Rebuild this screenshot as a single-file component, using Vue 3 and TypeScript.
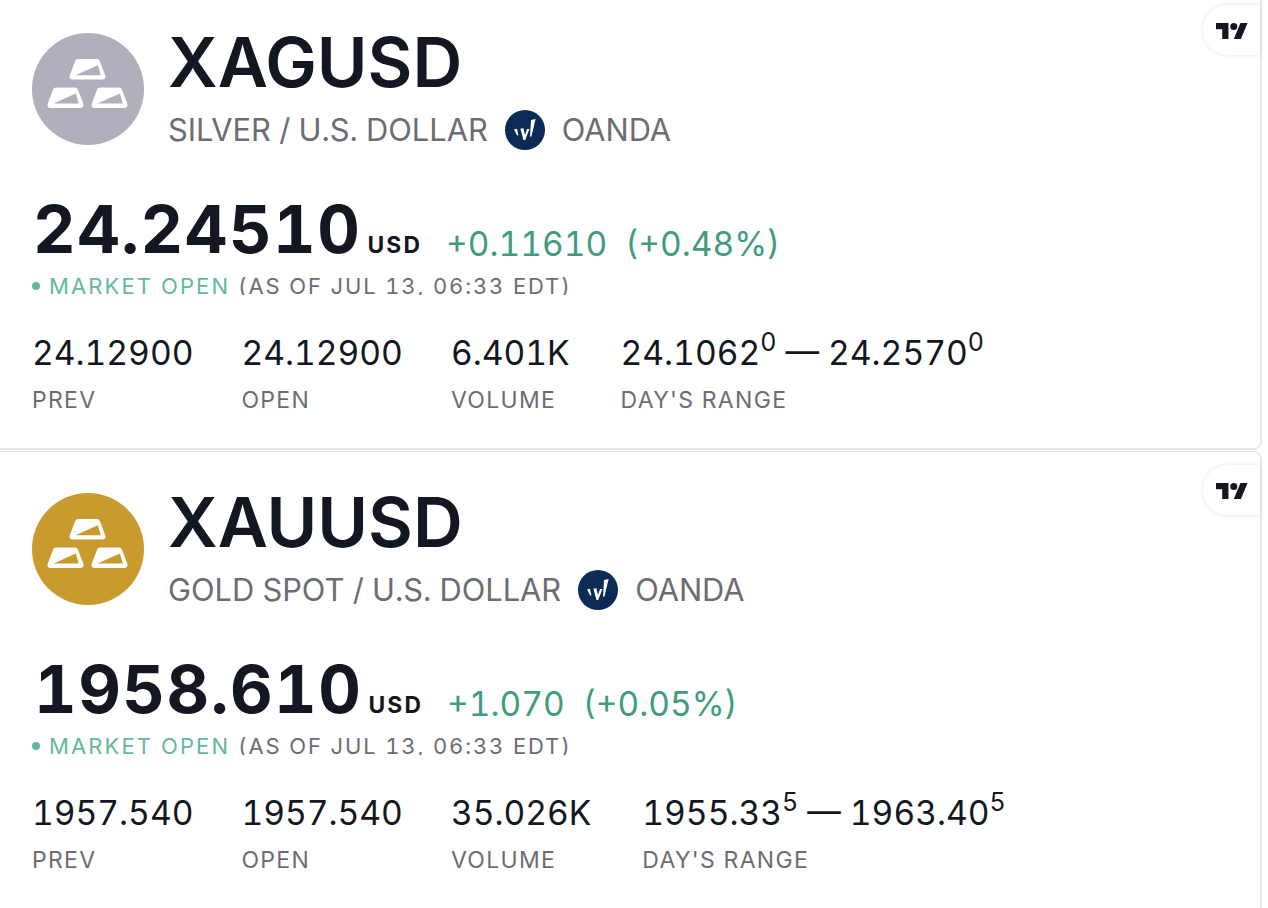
<script setup lang="ts">
interface Stat {
  label: string
  value: string
}

interface Quote {
  symbol: string
  name: string
  tone: string
  price: string
  change: string
  percent: string
  stats: Stat[]
  low: string
  lowSup: string
  high: string
  highSup: string
}

const quotes: Quote[] = [
  {
    symbol: "XAGUSD",
    name: "SILVER / U.S. DOLLAR",
    tone: "#b0afbb",
    price: "24.24510",
    change: "+0.11610",
    percent: "(+0.48%)",
    stats: [
      { label: "PREV", value: "24.12900" },
      { label: "OPEN", value: "24.12900" },
      { label: "VOLUME", value: "6.401K" },
    ],
    low: "24.1062",
    lowSup: "0",
    high: "24.2570",
    highSup: "0",
  },
  {
    symbol: "XAUUSD",
    name: "GOLD SPOT / U.S. DOLLAR",
    tone: "#c99a2e",
    price: "1958.610",
    change: "+1.070",
    percent: "(+0.05%)",
    stats: [
      { label: "PREV", value: "1957.540" },
      { label: "OPEN", value: "1957.540" },
      { label: "VOLUME", value: "35.026K" },
    ],
    low: "1955.33",
    lowSup: "5",
    high: "1963.40",
    highSup: "5",
  },
]

// top, left and right ingot of the stack
const bars = [
  { x: 0, y: 0 },
  { x: -22, y: 28.4 },
  { x: 22, y: 28.4 },
]
</script>

<template>
  <div class="page">
    <section v-for="q in quotes" :key="q.symbol" class="card">
      <div class="tv-badge">
        <svg class="tv-mark" width="32" height="16" viewBox="0 4 36 18">
          <path d="M14 22H7V11H0V4h14v18zM28 22h-8l7.5-18h8L28 22z" fill="#131722" />
          <circle cx="20" cy="8" r="4" fill="#131722" />
        </svg>
      </div>

      <header class="head">
        <svg class="logo" width="112" height="112" viewBox="0 0 112 112">
          <circle cx="56" cy="56" r="56" :fill="q.tone" />
          <g v-for="(b, i) in bars" :key="i" :transform="`translate(${b.x} ${b.y})`">
            <path d="M46 29H65L70.5 43.5H40.5Z" fill="#fff" stroke="#fff" stroke-width="6" stroke-linejoin="round" />
            <path d="M43.6 42.2L65.8 32.2L68.8 42.2Z" :fill="q.tone" />
          </g>
        </svg>
        <div class="head-text">
          <h1 class="symbol">{{ q.symbol }}</h1>
          <div class="desc">
            <span>{{ q.name }}</span>
            <svg class="broker" width="40" height="40" viewBox="0 0 40 40">
              <circle cx="20" cy="20" r="20" fill="#0b2a55" />
              <path d="M9 19.5L12 18.8L13.4 25.4L12.2 25.6Z" fill="#fff" />
              <path d="M15.4 18.8L18.4 18.2L20 25L22 19L24.4 19L20.2 30L18.4 30Z" fill="#fff" />
              <path d="M26 10L30.6 9L26.4 26.6L25 26.8Z" fill="#fff" />
            </svg>
            <span>OANDA</span>
          </div>
        </div>
      </header>

      <div class="price-row">
        <span class="price">{{ q.price }}</span>
        <span class="currency">USD</span>
        <span class="change">{{ q.change }}</span>
        <span class="change">{{ q.percent }}</span>
      </div>

      <div class="status">
        <i class="dot"></i>
        <span class="open">MARKET OPEN</span>
        <span class="asof">(AS OF JUL 13, 06:33 EDT)</span>
      </div>

      <div class="stats">
        <div v-for="s in q.stats" :key="s.label" class="stat">
          <div class="value">{{ s.value }}</div>
          <div class="label">{{ s.label }}</div>
        </div>
        <div class="stat range">
          <div class="value">
            {{ q.low }}<sup>{{ q.lowSup }}</sup> — {{ q.high }}<sup>{{ q.highSup }}</sup>
          </div>
          <div class="label">DAY'S RANGE</div>
        </div>
      </div>
    </section>
  </div>
</template>

<style scoped>
.page {
  width: 1262px;
  height: 908px;
  overflow: hidden;
  font-family: Inter, "Liberation Sans", sans-serif;
  font-variant-numeric: tabular-nums;
  color: #131722;
  background: #fff;
}

.card {
  position: relative;
  box-sizing: border-box;
  height: 450px;
  padding: 33px 0 0 32px;
  background: #fff;
  border-right: 2px solid #e8e8ea;
  border-bottom: 2px solid #e6e6e8;
  border-bottom-right-radius: 8px;
}

.card + .card {
  height: 458px;
  margin-top: 1px;
  padding-top: 41px;
  border-top: 1px solid #e6e6e8;
  border-bottom: none;
  border-top-right-radius: 8px;
  border-bottom-right-radius: 0;
}

.tv-badge {
  position: absolute;
  top: 5px;
  right: 0;
  width: 57px;
  height: 50px;
  display: flex;
  align-items: center;
  padding-left: 13px;
  box-sizing: border-box;
  background: #fff;
  border-radius: 25px 0 0 25px;
  box-shadow: 0 0 5px rgba(19, 23, 34, 0.1);
}

.card + .card .tv-badge {
  top: 13px;
}

.tv-mark {
  margin-top: 2px;
}

.head {
  display: flex;
  gap: 24px;
}

.logo {
  flex: none;
}

.head-text {
  margin-top: -8px;
}

.symbol {
  margin: 0;
  font-size: 69px;
  line-height: 74px;
  font-weight: 600;
  letter-spacing: 0;
}

.desc {
  display: flex;
  align-items: center;
  gap: 17px;
  margin-top: 11px;
  font-size: 30.8px;
  line-height: 40px;
  color: #6c6d74;
}

.broker {
  flex: none;
}

.price-row {
  display: flex;
  align-items: baseline;
  margin-top: 39px;
  padding-left: 1px;
}

.card + .card .price-row {
  padding-left: 2px;
}

.price {
  font-size: 66px;
  line-height: 80px;
  font-weight: 700;
  letter-spacing: 1.5px;
}

.currency {
  margin-left: 6px;
  margin-right: 24px;
  font-size: 22.8px;
  font-weight: 700;
  letter-spacing: 2.2px;
}

.change {
  align-self: flex-end;
  margin-right: 18px;
  margin-bottom: 5px;
  font-size: 33.5px;
  line-height: 40px;
  color: #3f9c7e;
}

.status {
  display: flex;
  align-items: center;
  height: 18px;
  margin-top: 8px;
  overflow: hidden;
  font-size: 22px;
  letter-spacing: 2.1px;
  line-height: 18px;
}

.dot {
  width: 8px;
  height: 8px;
  margin-right: 9px;
  border-radius: 50%;
  background: #64b89c;
}

.open {
  margin-right: 8px;
  color: #64b89c;
}

.asof {
  letter-spacing: 1.85px;
  color: #6c6d74;
}

.stats {
  display: flex;
  gap: 48px;
  margin-top: 37px;
}

.range {
  margin-left: 3px;
}

.value {
  font-size: 33.6px;
  line-height: 42px;
  white-space: nowrap;
}

.value sup {
  font-size: 25px;
  line-height: 0;
  vertical-align: 14px;
}

.label {
  margin-top: 12px;
  font-size: 23px;
  line-height: 28px;
  letter-spacing: 1.3px;
  color: #6c6d74;
}
</style>

<style>
html,
body {
  background: #fff;
}
</style>
